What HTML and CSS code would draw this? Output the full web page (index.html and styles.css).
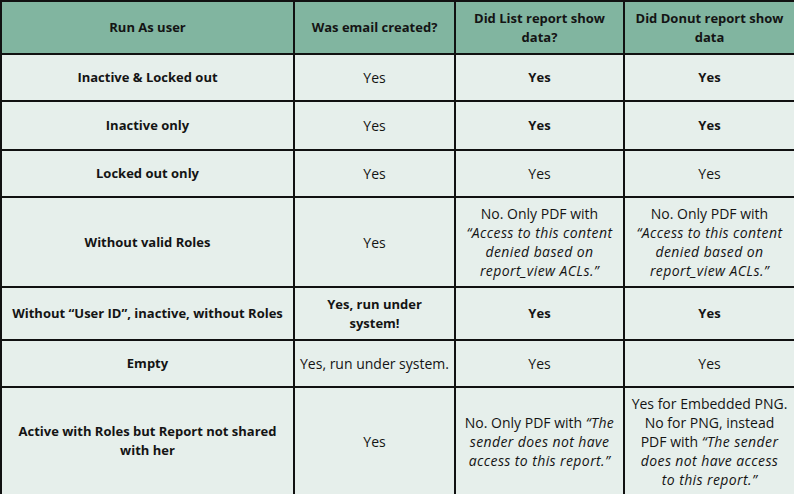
FILE: index.html
```html
<!DOCTYPE html>
<html>
<head>
<meta charset="utf-8">
<link rel="stylesheet" href="styles.css">
</head>
<body>
<table class="grid">
  <colgroup>
    <col class="c1"><col class="c2"><col class="c3"><col class="c4">
  </colgroup>
  <thead>
    <tr class="h-head">
      <th>Run As user</th>
      <th>Was email created?</th>
      <th>Did List report show data?</th>
      <th>Did Donut report show data</th>
    </tr>
  </thead>
  <tbody>
    <tr class="h-47">
      <td class="b">Inactive &amp; Locked out</td>
      <td>Yes</td>
      <td class="b">Yes</td>
      <td class="b">Yes</td>
    </tr>
    <tr class="h-49">
      <td class="b">Inactive only</td>
      <td>Yes</td>
      <td class="b">Yes</td>
      <td class="b">Yes</td>
    </tr>
    <tr class="h-47">
      <td class="b">Locked out only</td>
      <td>Yes</td>
      <td>Yes</td>
      <td>Yes</td>
    </tr>
    <tr class="h-90">
      <td class="b">Without valid Roles</td>
      <td>Yes</td>
      <td>No. Only PDF with <i>“Access to this content denied based on report_view ACLs.”</i></td>
      <td>No. Only PDF with <i>“Access to this content denied based on report_view ACLs.”</i></td>
    </tr>
    <tr class="h-53">
      <td class="b">Without “User ID”, inactive, without Roles</td>
      <td class="b">Yes, run under<br>system!</td>
      <td class="b">Yes</td>
      <td class="b">Yes</td>
    </tr>
    <tr class="h-47">
      <td class="b">Empty</td>
      <td>Yes, run under system.</td>
      <td>Yes</td>
      <td>Yes</td>
    </tr>
    <tr class="h-108">
      <td class="b">Active with Roles but Report not shared with her</td>
      <td>Yes</td>
      <td>No. Only PDF with <i>“The</i><br><i>sender does not have access to this report.”</i></td>
      <td>Yes for Embedded PNG.<br>No for PNG, instead<br>PDF with <i>“The sender</i><br><i>does not have access</i><br><i>to this report.”</i></td>
    </tr>
  </tbody>
</table>
</body>
</html>
```
FILE: styles.css
```css
html, body {
  margin: 0;
  padding: 0;
  background: #ffffff;
}
.grid {
  border-collapse: collapse;
  width: 794px;
  table-layout: fixed;
  font-family: "Open Sans", "Liberation Sans", sans-serif;
  font-size: 14px;
  line-height: 19px;
  color: #141414;
}
.c1 { width: 293px; }
.c2 { width: 161px; }
.c3 { width: 169px; }
.c4 { width: 171px; }
.grid th,
.grid td {
  border: 2px solid #111;
  text-align: center;
  vertical-align: middle;
  padding: 4px 5px;
  box-sizing: border-box;
}
.grid th {
  background: #81b5a0;
  font-weight: 700;
  font-size: 13px;
  padding: 4px 2px;
}
.grid td {
  background: #e6efeb;
  font-weight: 400;
}
.grid td.b {
  font-weight: 700;
  font-size: 13px;
}
.grid i {
  font-style: italic;
  letter-spacing: 0.4px;
}
.h-head { height: 53px; }
.h-47 { height: 47px; }
.h-49 { height: 49px; }
.h-53 { height: 53px; }
.h-90 { height: 90px; }
.h-108 { height: 108px; }
```
